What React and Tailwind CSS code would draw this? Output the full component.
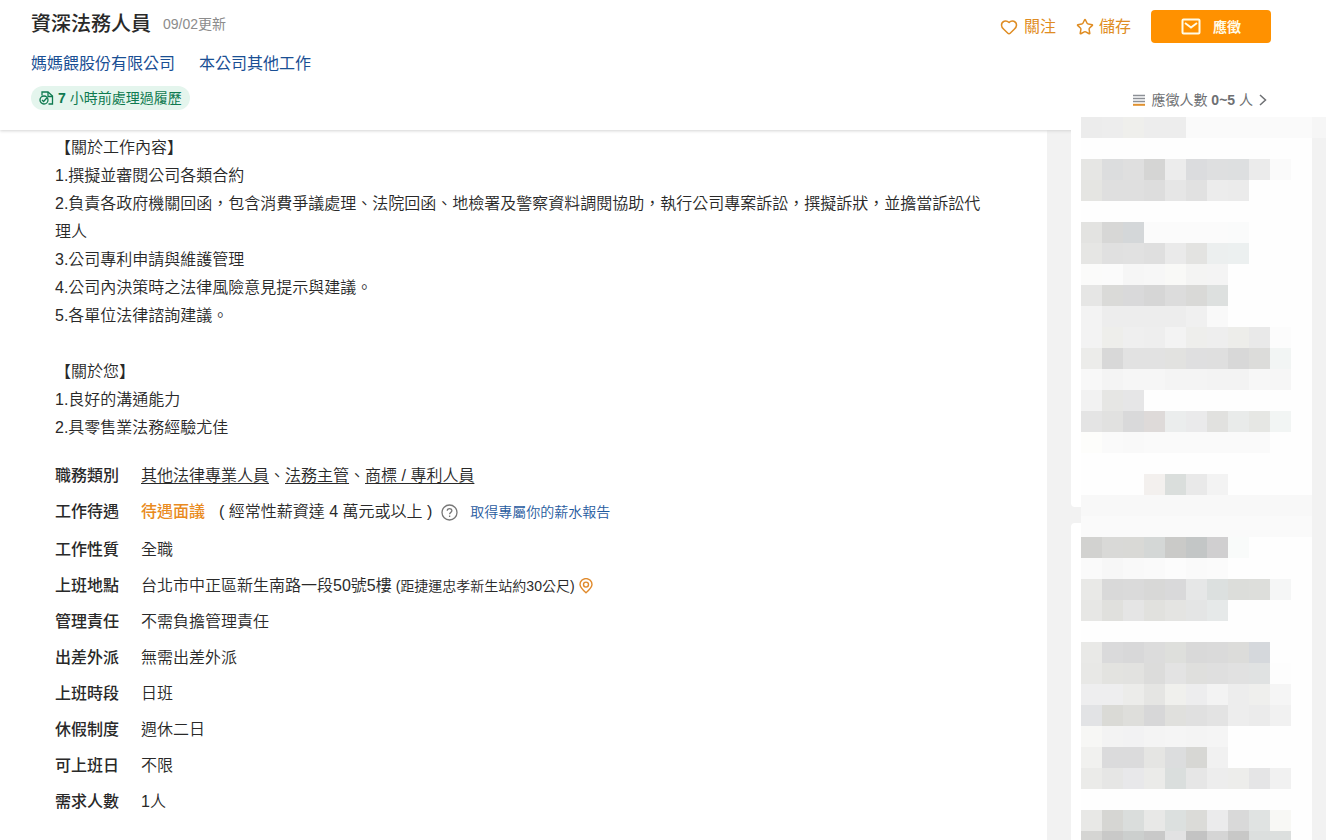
import { Heart, Star } from "lucide-react";

const description = `【關於工作內容】
1.撰擬並審閱公司各類合約
2.負責各政府機關回函，包含消費爭議處理、法院回函、地檢署及警察資料調閱協助，執行公司專案訴訟，撰擬訴狀，並擔當訴訟代理人
3.公司專利申請與維護管理
4.公司內決策時之法律風險意見提示與建議。
5.各單位法律諮詢建議。

【關於您】
1.良好的溝通能力
2.具零售業法務經驗尤佳`;

const categories = ["其他法律專業人員", "法務主管", "商標 / 專利人員"];

const details = [
  { label: "管理責任", value: "不需負擔管理責任" },
  { label: "出差外派", value: "無需出差外派" },
  { label: "上班時段", value: "日班" },
  { label: "休假制度", value: "週休二日" },
  { label: "可上班日", value: "不限" },
  { label: "需求人數", value: "1人" },
];

// one string per row of blocks, "-" leaves a block empty
const mosaicRows = [
  "ececec ededed efefec ededed ededed fafafa fafafa fafafa fafafa fafafa fafafa",
  "-",
  "e6e6e4 dcddde dfdfdf d5d5d4 ececec dbdcde dedfe0 dddfe0 ebebeb fafafa",
  "e5e5e2 dfdfdf dfdfdf dddddd e6e6e6 e1e1e1 ececec ebebeb",
  "-",
  "e3e3e1 d7d7d6 d4d7d9 fbfbfb fbfbfb fbfbfb fbfbfb fafbfb",
  "e6e6e4 e0e0e0 e1e1e1 dfdfdf eaeaea e3e3e1 ecefef ecf0f0",
  "fbfbfa fbfbfb f6f6f6 f7f7f7 f9f9f7 f4f4f3 f4f4f4",
  "e6e6e5 dadad8 d9d9da d6d6d6 dcdcdc d9d9d7 dde0df",
  "f3f3f3 ededed ededed ededed ededed f0f0f0 f9f9f9",
  "f3f3f3 eeeeeb efefef eeeeee f3f3f3 eeeeec eeeeee ededea e9e9e9 fcfcfc",
  "ececea d8d8d8 e2e2e2 e2e2e2 e2e2e0 dfdfe0 dfdfdf d8d8d8 dcdcda f2f5f4",
  "f8f8f8 f4f4f4 f6f6f6 f6f6f6 f4f4f4 f4f4f4 f3f3f3 f3f3f3 f7f7f7 f6f6f6",
  "f2f2f2 e6e6e4 e6e6e7",
  "e4e4e4 e1e1e0 d9d9da dedad9 ebeded eaeaeb e1e1df e9ebea e6e7e4 f2f5f4",
  "fdfdfb fafafa f9f9f9 fafafa fafafa fafafa fafafa fafafa fafafa",
  "-",
  "- - - f3f0ee dadedc e9e9e9 f3f3f3",
  "f8f8f8 f8f8f8 f8f8f8 f8f8f8 f8f8f8 f8f8f8 f8f8f8 f8f8f8 f8f8f8 f8f8f8 f8f8f8",
  "fafafa fafafa fafafa fafafa fafafa fafafa fafafa fafafa fafafa fafafa fafafa",
  "d2d2d0 d9d9d7 d9d9d6 d4d7d6 cacac8 c3c6c6 d0cfd0 f9fbfa",
  "fafafa f7f7f7 f9f9f9 fafafa fcfcfc fafafa fbfbfb",
  "e9e9e7 d9d9d9 dadada d8d8d7 d9d9da e6e7e7 dce0df dcddda dddedb f5f6f6",
  "e7e7e5 e0e0dd e5e5e5 e1e1de e4e4e2 e4e5e5 e6e9e9",
  "-",
  "e9e9e7 dadadb d8d8d9 dcdcdc dedfdc d9d9d9 dadada dcdcda d5d8dc",
  "e8e8e6 e3e3e0 e2e2e0 dcdcdb e3e3e3 dfdfdd dfdfdf e1e1e1 e0e2e2 fdfdfd",
  "eeeeef eeeeef ececea e5e5e3 f0f0ed ededee f3f3f3 ededed efefed f5f5f5",
  "e2e3e5 dadad6 dededb d7d7d8 e0e0dd e0e0e0 e3e3e3 ededed ebebeb f1f1f1",
  "f7f7f5 f3f3f3 f2f2f3 f4f4f4 f5f5f5 f4f4f4 f5f5f5",
  "f1f1ef dbdbdc dbdbdc e5e5e3 dcddde d7d7d4 f1f1f1",
  "ebebe9 e6e6e5 e8e8ea ebebe9 dadedd e6e6e6 ededed ededeb e5e5e6 f1f1f1",
  "-",
  "e8e8e6 d6d6d3 dadddc e8e8e7 dce0df dbdbd8 ebebec d9d9d9 e0e3e2 f8f8f5",
  "d5d5d3 c9c9c8 cccfce c9c9c9 e2e2e3 c3c3c3 d5d5d5 c8c8c7 dcdfde dcdfde",
].map((row) => row.split(" "));

function ResumeIcon() {
  return (
    <svg width="15" height="14" viewBox="0 0 15 14" fill="none" stroke="currentColor" strokeWidth="1.3">
      <path d="M3 4.5V1h6l4.5 4v8H9.5" />
      <path d="M9 1v4.5h4.5" />
      <circle cx="5" cy="9" r="4" />
      <path d="M3 9l1.6 1.5L8 6.8" />
    </svg>
  );
}

function MailIcon() {
  return (
    <svg width="20" height="17" viewBox="0 0 20 17" fill="none" stroke="currentColor" strokeWidth="2">
      <rect x="1.5" y="1.5" width="17" height="14" rx="1" />
      <path d="M4 5l6 4.5L16 5" />
    </svg>
  );
}

function BarsIcon() {
  return (
    <svg width="12" height="12" viewBox="0 0 12 12">
      <path d="M0 1.5h12M0 4.5h12M0 7.5h12" stroke="#8c9096" strokeWidth="1.6" />
      <path d="M0 10.8h12" stroke="#e0912f" strokeWidth="2" />
    </svg>
  );
}

function ArrowIcon() {
  return (
    <svg width="8" height="12" viewBox="0 0 8 12" fill="none" stroke="currentColor" strokeWidth="1.5">
      <path d="M1 1l5.5 5L1 11" />
    </svg>
  );
}

function HelpIcon() {
  return (
    <svg width="17" height="17" viewBox="0 0 17 17" fill="none" stroke="#777777" strokeWidth="1.3">
      <circle cx="8.5" cy="8.5" r="7.5" />
      <path d="M6.2 6.8c0-3 4.7-3 4.7 0 0 1.6-2.3 1.6-2.3 3.4M8.6 11.6v1.4" />
    </svg>
  );
}

function PinIcon() {
  return (
    <svg width="14" height="16" viewBox="0 0 14 16" fill="none" stroke="#e08a2c" strokeWidth="1.4">
      <path d="M7 14.8C3.5 11.8 1 9.4 1 6.6a6 6 0 0 1 12 0c0 2.8-2.5 5.2-6 8.2z" />
      <circle cx="7" cy="6.6" r="2.5" />
    </svg>
  );
}

function DetailRow({ label, children }) {
  return (
    <div className="flex">
      <dt className="w-[86px] shrink-0 font-medium">{label}</dt>
      <dd>{children}</dd>
    </div>
  );
}

function Header() {
  return (
    <header className="relative flex justify-between bg-white pr-[55px] pb-5 pl-[31px] shadow-[0_1px_3px_#d4d4d4]">
      <div className="pt-[9px]">
        <div className="flex items-center gap-3">
          <h1 className="text-xl leading-[30px] font-medium text-[#292929]">資深法務人員</h1>
          <span className="text-sm text-[#8c8c8c]">09/02更新</span>
        </div>
        <div className="mt-[13px] flex gap-6 leading-6 text-[#1a4f94]">
          <a href="#company">媽媽餵股份有限公司</a>
          <a href="#jobs">本公司其他工作</a>
        </div>
        <div className="mt-[10px] flex h-6 w-fit items-center gap-1 rounded-full bg-[#e4f5ed] px-2 text-sm text-[#0f7a50]">
          <ResumeIcon />
          <span>
            <b>7</b> 小時前處理過履歷
          </span>
        </div>
      </div>

      <div className="flex flex-col items-end justify-between pt-[10px]">
        <div className="flex items-center gap-5 text-[#df8c22]">
          <button type="button" className="flex items-center gap-[6px]">
            <Heart size={18} strokeWidth={2} />
            關注
          </button>
          <button type="button" className="flex items-center gap-[5px]">
            <Star size={18} strokeWidth={2} />
            儲存
          </button>
          <button
            type="button"
            className="flex h-[33px] w-[120px] items-center justify-center gap-3 rounded bg-[#ff9100] text-sm font-bold text-[#fffbe8]"
          >
            <MailIcon />
            應徵
          </button>
        </div>
        <a href="#applicants" className="mr-1 flex items-center gap-[6px] text-sm text-[#6e7073]">
          <BarsIcon />
          <span>
            應徵人數 <b>0~5</b> 人
          </span>
          <ArrowIcon />
        </a>
      </div>
    </header>
  );
}

export default function App() {
  return (
    <div className="flex min-h-screen flex-col overflow-hidden bg-white font-['Liberation_Sans','Noto_Sans_CJK_TC',sans-serif] text-base text-[#292929]">
      <Header />

      <main className="flex flex-1 bg-[#f2f2f2]">
        <article className="min-w-0 flex-1 bg-white pt-1 pr-[60px] pb-4 pl-[55px] font-[350]">
          <p className="leading-7 whitespace-pre-line">{description}</p>

          <dl className="mt-[22px] flex flex-col gap-3 leading-6">
            <DetailRow label="職務類別">
              {categories.map((name, index) => (
                <span key={name}>
                  {index > 0 && "、"}
                  <a href="#category" className="underline underline-offset-2">
                    {name}
                  </a>
                </span>
              ))}
            </DetailRow>
            <DetailRow label="工作待遇">
              <div className="flex items-center pb-[2px]">
                <span className="mr-[14px] font-medium text-[#e98a20]">待遇面議</span>
                <span className="mr-[9px]">( 經常性薪資達 4 萬元或以上 )</span>
                <button type="button" aria-label="說明" className="mr-3">
                  <HelpIcon />
                </button>
                <a href="#salary" className="text-sm text-[#1f5a9e]">
                  取得專屬你的薪水報告
                </a>
              </div>
            </DetailRow>
            <DetailRow label="工作性質">全職</DetailRow>
            <DetailRow label="上班地點">
              <div className="flex items-center gap-1">
                <span>台北市中正區新生南路一段50號5樓</span>
                <span className="text-sm">(距捷運忠孝新生站約30公尺)</span>
                <a href="#map" aria-label="地圖">
                  <PinIcon />
                </a>
              </div>
            </DetailRow>
            {details.map((item) => (
              <DetailRow key={item.label} label={item.label}>
                {item.value}
              </DetailRow>
            ))}
          </dl>
        </article>

        <aside className="relative mr-[14px] ml-6 flex w-[241px] shrink-0 flex-col gap-4">
          <section className="h-[377px] rounded-b bg-white" />
          <section className="flex-1 rounded-t bg-white" />
          <div className="absolute -top-[13px] left-[10px] grid auto-rows-[21px] grid-cols-[repeat(11,21px)]">
            {mosaicRows.map((row, y) =>
              Array.from({ length: 11 }, (_, x) => (
                <div
                  key={`${y}-${x}`}
                  style={{ backgroundColor: row[x] && row[x] !== "-" ? `#${row[x]}` : "#fefefe" }}
                />
              ))
            )}
          </div>
          <div className="absolute -top-[13px] -right-[14px] h-[21px] w-[14px] bg-[#f6f6f6]" />
        </aside>
      </main>
    </div>
  );
}
